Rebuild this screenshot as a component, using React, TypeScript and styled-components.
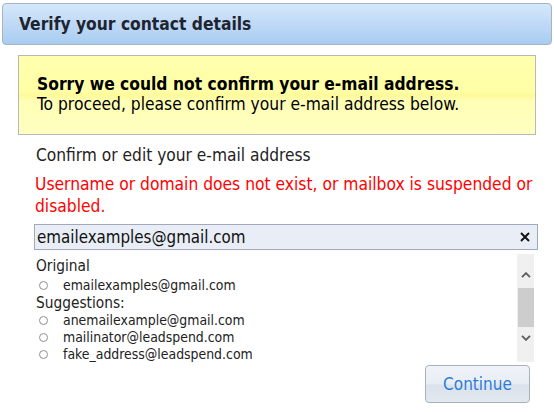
import React, { useState } from "react";
import styled, { createGlobalStyle } from "styled-components";

const GlobalStyle = createGlobalStyle`
  html, body {
    margin: 0;
    padding: 0;
    background: #ffffff;
  }
  body {
    font-family: "DejaVu Sans Condensed", "DejaVu Sans", sans-serif;
    color: #222222;
  }
`;

const suggestions = [
  "anemailexample@gmail.com",
  "mailinator@leadspend.com",
  "fake_address@leadspend.com",
];

const Page = styled.div`
  width: 554px;
  height: 412px;
  padding: 3px 0 0 2px;
  box-sizing: border-box;
`;

const TitleBar = styled.div`
  width: 550px;
  height: 42px;
  box-sizing: border-box;
  border: 1px solid #a9b2c2;
  border-radius: 4px;
  background: linear-gradient(180deg, #d4e8fb 0%, #bfd9f6 50%, #a8cdf1 100%);
  display: flex;
  align-items: center;
  padding-left: 16px;
  font-size: 17.3px;
  font-weight: bold;
  color: #1e2430;
`;

const Notice = styled.div`
  margin: 10px 0 0 16px;
  width: 518px;
  height: 80px;
  box-sizing: border-box;
  border: 1px solid #b8b8b8;
  background: linear-gradient(180deg, #ffffae 0%, #ffffa6 46%, #fff99a 50%, #ffffb6 58%, #ffffc0 100%);
  padding: 18px 0 0 18px;
  font-size: 17.3px;
  line-height: 20px;
  color: #000;
`;

const Strong = styled.div`
  font-weight: bold;
`;

const Body = styled.div`
  padding: 9px 0 0 32px;
`;

const Label = styled.div`
  font-size: 17.2px;
  line-height: 22px;
  padding-left: 2px;
  color: #222;
`;

const ErrorText = styled.div`
  margin-top: 7px;
  width: 504px;
  font-size: 17.3px;
  line-height: 22px;
  padding-left: 1px;
  color: #ff0000;
`;

const InputWrap = styled.div`
  position: relative;
  margin-top: 7px;
  width: 504px;
  height: 26px;
`;

const EmailInput = styled.input`
  width: 100%;
  height: 100%;
  box-sizing: border-box;
  border: 1px solid #a2a8bd;
  background: #e9edf6;
  padding: 0 24px 0 2px;
  font-family: inherit;
  font-size: 16.8px;
  color: #111;
  outline: none;
`;

const ClearButton = styled.button`
  position: absolute;
  right: 7px;
  top: 6px;
  width: 12px;
  height: 14px;
  padding: 0;
  border: none;
  background: transparent;
  cursor: pointer;
  display: flex;
  align-items: center;
  justify-content: center;
`;

const ListBox = styled.div`
  margin-top: 4px;
  width: 500px;
  height: 108px;
  display: flex;
`;

const ListContent = styled.div`
  flex: 1;
  padding-top: 3px;
`;

const GroupTitle = styled.div`
  height: 18px;
  font-size: 15.3px;
  line-height: 18px;
  padding-left: 2px;
  color: #222;
`;

const Option = styled.label`
  display: flex;
  align-items: center;
  gap: 15px;
  height: 17px;
  padding-left: 5px;
  font-size: 13.9px;
  line-height: 17px;
  color: #222;
  cursor: pointer;
  &:nth-child(2) {
    height: 18px;
    padding-top: 1px;
  }
`;

const Radio = styled.input`
  appearance: none;
  margin: 0;
  width: 9px;
  height: 9px;
  border: 1px solid #8f8f8f;
  border-radius: 50%;
  background: #fff;
  box-sizing: border-box;
  &:checked {
    background: radial-gradient(circle, #333 0 35%, #fff 45%);
  }
`;

const ScrollTrack = styled.div`
  width: 17px;
  background: #f0f0f0;
  display: flex;
  flex-direction: column;
  align-items: center;
`;

const ArrowBox = styled.div<{ $end?: boolean }>`
  height: 34px;
  width: 17px;
  box-sizing: border-box;
  display: flex;
  justify-content: center;
  align-items: ${(p) => (p.$end ? "flex-start" : "flex-end")};
  padding: ${(p) => (p.$end ? "8px 0 0" : "0 0 10px")};
`;

const Thumb = styled.div`
  width: 16px;
  height: 39px;
  background: #cdcdcd;
`;

const Footer = styled.div`
  width: 496px;
  display: flex;
  justify-content: flex-end;
  margin-top: 3px;
`;

const ContinueButton = styled.button`
  width: 105px;
  height: 38px;
  border: 1px solid #a9b0bd;
  border-radius: 4px;
  background: linear-gradient(180deg, #f1f4f9 0%, #e8edf4 48%, #dbe2ec 54%, #e3e8f0 100%);
  font-family: inherit;
  font-size: 17px;
  color: #2b7cd8;
  cursor: pointer;
`;

const Chevron = ({ up }: { up?: boolean }) => (
  <svg width="10" height="6" viewBox="0 0 10 6">
    <path
      d={up ? "M1 5.2 L5 1.2 L9 5.2" : "M1 0.8 L5 4.8 L9 0.8"}
      fill="none"
      stroke="#5e5e5e"
      strokeWidth="1.9"
    />
  </svg>
);

export default function App() {
  const [email, setEmail] = useState("emailexamples@gmail.com");
  const [picked, setPicked] = useState<string | null>(null);

  return (
    <>
      <GlobalStyle />
      <Page>
        <TitleBar>Verify your contact details</TitleBar>
        <Notice>
          <Strong>Sorry we could not confirm your e-mail address.</Strong>
          <div>To proceed, please confirm your e-mail address below.</div>
        </Notice>
        <Body>
          <Label>Confirm or edit your e-mail address</Label>
          <ErrorText>
            Username or domain does not exist, or mailbox is suspended or disabled.
          </ErrorText>
          <InputWrap>
            <EmailInput value={email} onChange={(e) => setEmail(e.target.value)} />
            <ClearButton onClick={() => setEmail("")} aria-label="Clear">
              <svg width="10" height="10" viewBox="0 0 10 10">
                <path d="M1 1 L9 9 M9 1 L1 9" stroke="#111" strokeWidth="1.9" />
              </svg>
            </ClearButton>
          </InputWrap>
          <ListBox>
            <ListContent>
              <GroupTitle>Original</GroupTitle>
              <Option>
                <Radio
                  type="radio"
                  name="email"
                  checked={picked === "emailexamples@gmail.com"}
                  onChange={() => setPicked("emailexamples@gmail.com")}
                />
                emailexamples@gmail.com
              </Option>
              <GroupTitle>Suggestions:</GroupTitle>
              {suggestions.map((s) => (
                <Option key={s}>
                  <Radio
                    type="radio"
                    name="email"
                    checked={picked === s}
                    onChange={() => setPicked(s)}
                  />
                  {s}
                </Option>
              ))}
            </ListContent>
            <ScrollTrack>
              <ArrowBox>
                <Chevron up />
              </ArrowBox>
              <Thumb />
              <ArrowBox $end>
                <Chevron />
              </ArrowBox>
            </ScrollTrack>
          </ListBox>
          <Footer>
            <ContinueButton>Continue</ContinueButton>
          </Footer>
        </Body>
      </Page>
    </>
  );
}
